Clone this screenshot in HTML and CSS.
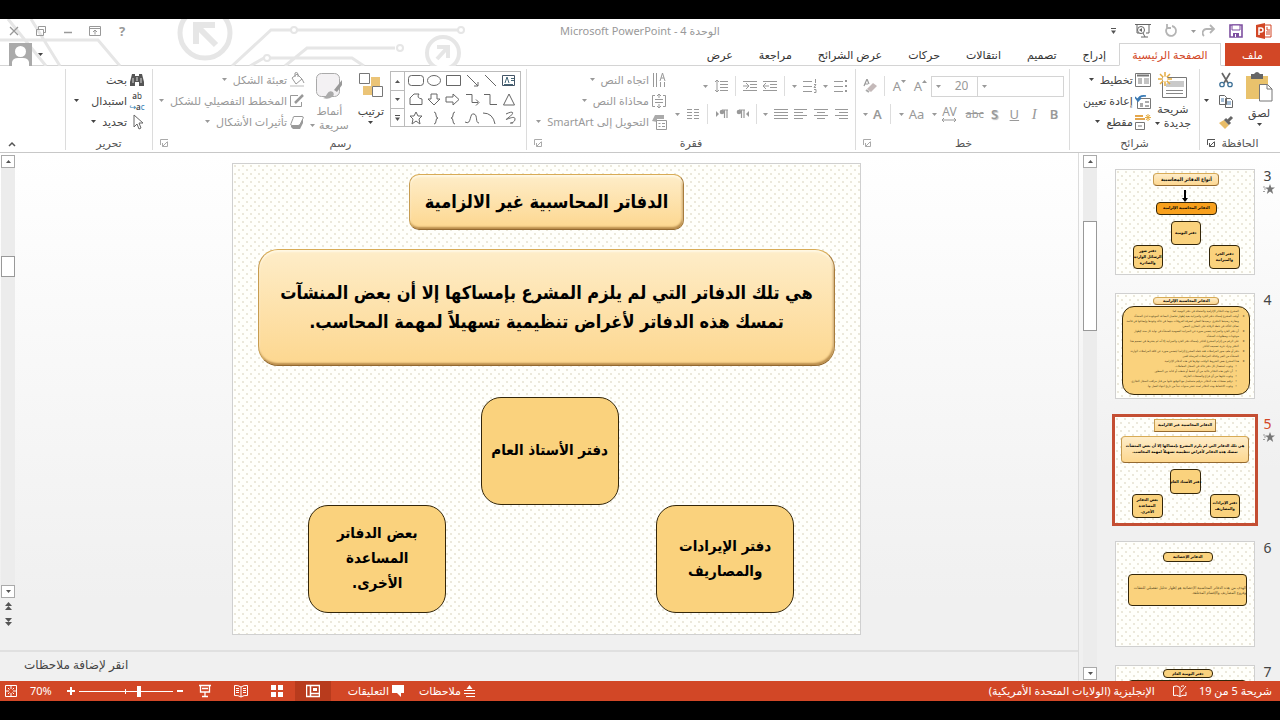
FILE: index.html
```html
<!DOCTYPE html>
<html lang="ar" dir="rtl">
<head>
<meta charset="utf-8">
<title>الوحدة 4 - Microsoft PowerPoint</title>
<link rel="stylesheet" href="styles.css">
</head>
<body>
<svg class="defs" aria-hidden="true">
  <symbol id="caret" viewBox="0 0 5 3"><path d="M0 0h5L2.500 3z" fill="currentColor"/></symbol>
  <symbol id="launch" viewBox="0 0 8 8"><path d="M8 .5H.5V6M7.500 2.500v5H2.500M7 3 3 7M2.500 4v3.500H6" fill="none" stroke="currentColor"/></symbol>
  <symbol id="star" viewBox="0 0 12 10"><path d="m7 0 1.300 3.500H12L9 5.800 10.200 10 7 7.400 3.800 10 5 5.800 2 3.500h3.700z" fill="currentColor"/><path d="M0 3h2M1 5h2M0 7.500h2" stroke="currentColor" stroke-width=".7"/></symbol>
</svg>

<div class="app">
  <header class="head">
    <svg class="circuit" viewBox="0 0 480 47" fill="none" stroke="#e6e6e6" stroke-width="3" aria-hidden="true">
      <path d="M0 21h98l22 26M8 0l38 47M31 0l29 47M232 47l39-36h190M250 47l14-8h88l12 8M285 47l22-18h88"/>
      <circle cx="294" cy="11" r="3" fill="#fff" stroke-width="2"/><circle cx="267" cy="39" r="3" fill="#fff" stroke-width="2"/><circle cx="461" cy="11" r="3" fill="#fff" stroke-width="2"/><circle cx="400" cy="29" r="3" fill="#fff" stroke-width="2"/>
      <circle cx="205" cy="14" r="25" fill="#fff" stroke-width="5"/><path d="M196 25V6h19M196 6l20 20" stroke-width="6"/>
      <circle cx="443" cy="34" r="16" fill="#fff" stroke-width="4"/><path d="M437 28h11v11M448 28l-11 12" stroke-width="4"/>
    </svg>
    <div class="titlebar">
      <div class="quick">
        <svg class="i16" viewBox="0 0 16 16"><path d="M7 2h8v12H7z" fill="#fff" stroke="#d24726"/><path d="M11 4v3h3M10 9h4M10 11h4" stroke="#d24726" fill="none"/><path d="M0 2 9 0v16L0 14z" fill="#d24726"/><path d="M3 12V5h2a1.800 1.800 0 0 1 0 4H3" fill="none" stroke="#fff" stroke-width="1.500"/></svg>
        <button aria-label="حفظ"><svg class="i14" viewBox="0 0 14 14"><path d="M1 1h12v12H1z" fill="#fff" stroke="#7d4fa0" stroke-width="1.600"/><path d="M3 1h8v5H3z" fill="#fff" stroke="#7d4fa0"/><path d="M4 9h6v4H4z" fill="#7d4fa0"/><path d="M6 10h1v3H6z" fill="#fff"/></svg></button>
        <button aria-label="تراجع" class="split"><svg class="i14" viewBox="0 0 14 14"><path d="M8 1l4 4-4 4M12 5H5a4 4 0 0 0-3 7" fill="none" stroke="#b4b4b4" stroke-width="1.800"/></svg><svg class="caret"><use href="#caret"/></svg></button>
        <button aria-label="تكرار"><svg class="i14" viewBox="0 0 14 14"><path d="M8 2a5 5 0 1 1-5 2M3 0v4h4" fill="none" stroke="#b4b4b4" stroke-width="1.800"/></svg></button>
        <button aria-label="بدء العرض"><svg class="i16" viewBox="0 0 16 16"><path d="M0 1.500h16M2 2v8h4M14 2v8h-3M6 14h7" fill="none" stroke="#666"/><circle cx="6" cy="7" r="3.500" fill="#fff" stroke="#666"/><path d="m7 5-3 2 3 2z" fill="#666"/><path d="m8 10 2 4" stroke="#666"/></svg></button>
        <button aria-label="تخصيص" class="more"><svg width="5" height="6" viewBox="0 0 5 6"><path d="M0 .5h5" stroke="#555"/><path d="M0 2.500h5L2.500 6z" fill="#555"/></svg></button>
      </div>
      <h1 class="title">الوحدة 4 - Microsoft PowerPoint</h1>
      <div class="window">
        <button aria-label="تعليمات">?</button>
        <button aria-label="خيارات الشريط"><svg class="i12" viewBox="0 0 12 10"><path d="M.5.500h11v9H.5zM.5 2.500h11M6 8.500v-4M4 6l2-2 2 2" fill="none" stroke="#999"/></svg></button>
        <button aria-label="تصغير"><svg class="i12" viewBox="0 0 12 10"><path d="M2 6.500h8" stroke="#999" stroke-width="1.500"/></svg></button>
        <button aria-label="استعادة"><svg class="i12" viewBox="0 0 12 10"><path d="M3.500 3V.5h7v6H8M1.500 3.500h7v6h-7z" fill="none" stroke="#999"/></svg></button>
        <button aria-label="إغلاق"><svg class="i12" viewBox="0 0 12 10"><path d="m2 1 8 8M10 1 2 9" stroke="#999" stroke-width="1.300"/></svg></button>
      </div>
    </div>
    <nav class="tabs">
      <button class="tab file">ملف</button>
      <button class="tab active">الصفحة الرئيسية</button>
      <button class="tab">إدراج</button>
      <button class="tab">تصميم</button>
      <button class="tab">انتقالات</button>
      <button class="tab">حركات</button>
      <button class="tab">عرض الشرائح</button>
      <button class="tab">مراجعة</button>
      <button class="tab">عرض</button>
      <button class="account" aria-label="الحساب"><svg class="caret"><use href="#caret"/></svg><svg width="23" height="23" viewBox="0 0 23 23"><path d="M0 0h23v23H0z" fill="#aaa"/><circle cx="11.500" cy="8.500" r="5.500" fill="#fff"/><path d="M3 23v-4q1-4 6-4h5q5 0 6 4v4z" fill="#fff"/></svg></button>
    </nav>
  </header>

  <section class="ribbon">
    <div class="group clipboard">
      <div class="body">
        <button class="big"><svg width="28" height="30" viewBox="0 0 28 30"><path d="M1 4h22v23H1z" fill="#e9c26c"/><path d="M6 2h3q3-4 6 0h3v5H6z" fill="#666"/><path d="M14.500 12.500h8l4.500 4.500v12h-12.500z" fill="#fff" stroke="#777"/><path d="M22 12.500V17h5" fill="none" stroke="#777"/></svg><span>لصق</span><svg class="caret"><use href="#caret"/></svg></button>
        <div class="stack">
          <button aria-label="قص"><svg class="i16" viewBox="0 0 16 16"><path d="m4 1 6 10M12 1 6 11" stroke="#666" stroke-width="1.700"/><circle cx="4" cy="12.500" r="2.200" fill="none" stroke="#3e7197" stroke-width="1.300"/><circle cx="12" cy="12.500" r="2.200" fill="none" stroke="#3e7197" stroke-width="1.300"/></svg></button>
          <button aria-label="نسخ"><svg class="i16" viewBox="0 0 16 16"><path d="M1.500 2.500h5l2 2v7h-7zM7.500 5.500h5l2 2v7h-7z" fill="#fff" stroke="#666"/><path d="M3 6h3M3 8h3M9 9h4M9 11h4" stroke="#4a7cae"/></svg><svg class="caret"><use href="#caret"/></svg></button>
          <button aria-label="نسخ التنسيق"><svg class="i16" viewBox="0 0 16 16"><path d="m1 9 5-3 5 5-4 4z" fill="#e9bd68"/><path d="m7 5 5 5M10 7l4-4" stroke="#666" stroke-width="3"/></svg></button>
        </div>
      </div>
      <div class="foot"><span>الحافظة</span><button aria-label="خيارات الحافظة"><svg class="launch"><use href="#launch"/></svg></button></div>
    </div>

    <div class="group slides">
      <div class="body">
        <button class="big"><svg width="30" height="28" viewBox="0 0 30 28"><path d="M4.500 5.500h24v20h-24z" fill="#fff" stroke="#777"/><path d="M12 9h14v6H8v-3z" fill="#c9c9c9"/><path d="M8 18.500h17M8 21.500h17" stroke="#888"/><path d="M7 0v14M0 7h14M2 2l10 10M12 2 2 12" stroke="#e5ad42" stroke-width="1.500"/><circle cx="7" cy="7" r="2.500" fill="#fff"/></svg><span>شريحة</span><span class="inline">جديدة<svg class="caret"><use href="#caret"/></svg></span></button>
        <div class="stack">
          <button><svg class="i16" viewBox="0 0 16 16"><path d="M.5 1.500h15v13H.5z" fill="#fff" stroke="#777"/><path d="M2 3.500h12" stroke="#777" stroke-width="2"/><path d="M3 6h4v6H3z" fill="#bbb"/><path d="M9 7h5M9 9h5M9 11h5" stroke="#888"/></svg><span>تخطيط</span><svg class="caret"><use href="#caret"/></svg></button>
          <button><svg class="i16" viewBox="0 0 16 16"><path d="M2.500 5.500h13v10h-13z" fill="#fff" stroke="#777"/><path d="M5 10h3v4H5zM10 8h4v2h-4zM10 12h4v2h-4z" fill="#aaa"/><path d="M3 7q1-5 8-4M0 4l3 4 3-3" fill="none" stroke="#3879b4" stroke-width="1.600"/></svg><span>إعادة تعيين</span></button>
          <button><svg class="i16" viewBox="0 0 16 16"><path d="M.5 8.500h9v7h-9z" fill="#fff" stroke="#777"/><path d="M0 5h10M0 2h8" stroke="#e4a64c" stroke-width="2"/><path d="M3 11h4v2H3z" fill="#bbb"/><path d="M13 0v7M10 3.500h6M11 1l4 5M15 1l-4 5" stroke="#e5ad42"/></svg><span>مقطع</span><svg class="caret"><use href="#caret"/></svg></button>
        </div>
      </div>
      <div class="foot"><span>شرائح</span></div>
    </div>

    <div class="group font dim">
      <div class="body rows">
        <div class="row">
          <label class="combo face"><select aria-label="الخط"><option></option></select><svg class="caret"><use href="#caret"/></svg></label><label class="combo size"><select aria-label="حجم الخط"><option>20</option></select><svg class="caret"><use href="#caret"/></svg></label>
          <button class="glyph grow">A<svg class="caret up"><use href="#caret"/></svg></button><button class="glyph grow">A<svg class="caret"><use href="#caret"/></svg></button><i class="sep"></i>
          <button aria-label="مسح التنسيق"><svg class="i14" viewBox="0 0 14 14"><path d="m1 7 3-7 2 5M2 5h3" fill="none" stroke="#999" stroke-width="1.200"/><path d="m4 10 6-6 4 3-6 6z" fill="#c4b9b9"/><path d="m3 11 3 2" stroke="#aaa" stroke-width="2"/></svg></button>
        </div>
        <div class="row letters">
          <button class="glyph"><b>B</b></button><button class="glyph serif"><em>I</em></button><button class="glyph"><u>U</u></button><button class="glyph shadow"><b>S</b></button><button class="glyph small"><s>abc</s></button>
          <button class="glyph split"><span class="av">AV<svg width="14" height="4" viewBox="0 0 14 4"><path d="M0 2h14M2 0 0 2l2 2M12 0l2 2-2 2" fill="none" stroke="currentColor"/></svg></span><svg class="caret"><use href="#caret"/></svg></button><button class="glyph split">Aa<svg class="caret"><use href="#caret"/></svg></button><i class="sep"></i><button class="glyph split"><b>A</b><svg class="caret"><use href="#caret"/></svg></button>
        </div>
      </div>
      <div class="foot"><span>خط</span><button aria-label="خيارات الخط"><svg class="launch"><use href="#launch"/></svg></button></div>
    </div>

    <div class="group para dim">
      <div class="body">
        <div class="rows">
          <div class="row">
            <button class="split" aria-label="تعداد نقطي"><svg class="i14" viewBox="0 0 14 14"><path d="M0 2.500h9M0 7.500h9M0 12.500h9" stroke="currentColor"/><path d="M11 1h2v2h-2zM11 6h2v2h-2zM11 11h2v2h-2z" fill="currentColor"/></svg><svg class="caret"><use href="#caret"/></svg></button>
            <button class="split" aria-label="تعداد رقمي"><svg class="i14" viewBox="0 0 14 14"><path d="M0 2.500h9M0 7.500h9M0 12.500h9M12.500 0v4M11 5.500h2L11 8.500h2M11 10.500h2v3h-2" fill="none" stroke="currentColor"/></svg><svg class="caret"><use href="#caret"/></svg></button><i class="sep"></i>
            <button aria-label="تقليل المسافة"><svg class="i14" viewBox="0 0 14 14"><path d="M0 2.500h14M7 5.500h7M7 8.500h7M0 11.500h14M0 7h6M3 4 0 7l3 3" fill="none" stroke="currentColor"/></svg></button>
            <button aria-label="زيادة المسافة"><svg class="i14" viewBox="0 0 14 14"><path d="M0 2.500h14M7 5.500h7M7 8.500h7M0 11.500h14M0 7h6M3 4l3 3-3 3" fill="none" stroke="currentColor"/></svg></button><i class="sep"></i>
            <button class="split" aria-label="تباعد الأسطر"><svg class="i14" viewBox="0 0 14 14"><path d="M6 2.500h8M6 5.500h8M6 8.500h8M6 11.500h8M3 1v12M1 3l2-2 2 2M1 11l2 2 2-2" fill="none" stroke="currentColor"/></svg><svg class="caret"><use href="#caret"/></svg></button>
          </div>
          <div class="row">
            <button aria-label="يمين"><svg class="i14" viewBox="0 0 14 14"><path d="M1 2.500h13M5 5.500h9M1 8.500h13M5 11.500h9" stroke="currentColor"/></svg></button>
            <button aria-label="توسيط"><svg class="i14" viewBox="0 0 14 14"><path d="M0 2.500h14M3 5.500h8M0 8.500h14M3 11.500h8" stroke="currentColor"/></svg></button>
            <button aria-label="يسار"><svg class="i14" viewBox="0 0 14 14"><path d="M0 2.500h13M0 5.500h9M0 8.500h13M0 11.500h9" stroke="currentColor"/></svg></button>
            <button class="split" aria-label="ضبط"><svg class="i14" viewBox="0 0 14 14"><path d="M0 2.500h14M0 5.500h14M0 8.500h14M0 11.500h14" stroke="currentColor"/></svg><svg class="caret"><use href="#caret"/></svg></button><i class="sep"></i>
            <button aria-label="من اليمين لليسار"><svg class="i14" viewBox="0 0 14 14"><path d="M4 3h6M6.500 3v8M9 3v8" stroke="currentColor" stroke-width="1.200"/><circle cx="4" cy="5" r="2.300" fill="currentColor"/><path d="M14 4v6l-3-3z" fill="currentColor"/></svg></button>
            <button aria-label="من اليسار لليمين"><svg class="i14" viewBox="0 0 14 14"><path d="M7 3h6M9.500 3v8M12 3v8" stroke="currentColor" stroke-width="1.200"/><circle cx="7" cy="5" r="2.300" fill="currentColor"/><path d="M1 4v6l3-3z" fill="currentColor"/></svg></button><i class="sep"></i>
            <button class="split" aria-label="أعمدة"><svg class="i14" viewBox="0 0 14 14"><path d="M1 2.500h5M1 5.500h5M1 8.500h5M1 11.500h5M8 2.500h5M8 5.500h5M8 8.500h5M8 11.500h5" stroke="currentColor"/></svg><svg class="caret"><use href="#caret"/></svg></button>
          </div>
        </div>
        <div class="stack">
          <button><svg class="i16" viewBox="0 0 16 16"><path d="M2.500 1v14M5.500 1v14M9 9l2.500-8L14 9M10 6h3M9.500 10v5M13.500 10v5" fill="none" stroke="currentColor"/></svg><span>اتجاه النص</span><svg class="caret"><use href="#caret"/></svg></button>
          <button><svg class="i16" viewBox="0 0 16 16"><path d="M4 2.500H1.500v11H4M12 2.500h2.500v11H12M4 6.500h8M4 9.500h8M8 1v4M6 3l2-2 2 2M8 11v4M6 13l2 2 2-2" fill="none" stroke="currentColor"/></svg><span>محاذاة النص</span><svg class="caret"><use href="#caret"/></svg></button>
          <button><svg class="i16" viewBox="0 0 16 16"><path d="M1 7 4 1h9v4H6v3z" fill="#aaa"/><path d="M5.500 6.500h10v9h-10z" fill="#fff" stroke="currentColor"/><path d="M7.500 9.500h2M11 9.500h3M7.500 12.500h2M11 12.500h3" stroke="currentColor"/></svg><span>التحويل إلى SmartArt</span><svg class="caret"><use href="#caret"/></svg></button>
        </div>
      </div>
      <div class="foot"><span>فقرة</span><button aria-label="خيارات الفقرة"><svg class="launch"><use href="#launch"/></svg></button></div>
    </div>

    <div class="group draw">
      <div class="body">
        <div class="gallery">
          <svg width="115" height="54" viewBox="0 0 115 54" fill="none" stroke="#666">
            <path d="M97.500 3.500h12v10h-12z" stroke="#456"/><path d="M100 11l2-6 2 6M106 6.500h3M106 8.500h3M99 12.500h9" stroke="#467"/>
            <path d="m80 3 11 11M62 3l11 11M73 10v4h-4"/><path d="M41.500 3.500h14v10h-14z"/><ellipse cx="29" cy="8.500" rx="6.500" ry="5"/><rect x="3.500" y="3.500" width="15" height="10" rx="3"/>
            <path d="M104 22l-5.500 11h11z"/><path d="M79 22.500h6v10h7M61 22.500h6v8h6M71 27.500l3 3-3 3M41 25h7v-3l6 5.500-6 5.500v-3h-7zM26 22h6v5h3l-6 6-6-6h3zM5 32.500V26l4-4h5q-3 4 3 5v5.500z"/>
            <path d="M101 42c8-4 9-1 2 4s7-4 7 1-9 4-2 4M78 41q10 0 12 11M60 50c7 4 4-10 9-8 4 1 1 9 5 9M50 40q-2 0-2 3t-2 3q2 0 2 3t2 3M29 40q2 0 2 3t2 3q-2 0-2 3t-2 3"/><path d="m11 40 2 4h4l-3 3 1 5-4-3-4 3 1-5-3-3h4z"/>
          </svg>
          <div class="pager">
            <button aria-label="أعلى"><svg class="caret up"><use href="#caret"/></svg></button><button aria-label="أسفل"><svg class="caret"><use href="#caret"/></svg></button><button aria-label="المزيد"><svg width="5" height="6" viewBox="0 0 5 6"><path d="M0 .5h5" stroke="#555"/><path d="M0 2.500h5L2.500 6z" fill="#555"/></svg></button>
          </div>
        </div>
        <button class="big arrange"><svg width="26" height="28" viewBox="0 0 26 28"><path d="M13 5h9v9h-9zM5 14h9v9H5z" fill="#ebc477"/><path d="M1.500 1.500h10v10h-10zM14.500 14.500h10v10h-10z" fill="#fff" stroke="#777"/></svg><span>ترتيب</span><svg class="caret"><use href="#caret"/></svg></button>
        <button class="big dim"><svg width="28" height="28" viewBox="0 0 28 28"><rect x="1.500" y="1.500" width="23" height="23" rx="5" fill="#f3f1f3" stroke="#aaa"/><path d="m27 8-8 10 3 2 5-7z" fill="#999"/><path d="M8 26q3-1 4-4 2-4 6-2 2 3-1 5-4 3-9 1z" fill="#aaa"/></svg><span>أنماط</span><span class="inline">سريعة<svg class="caret"><use href="#caret"/></svg></span></button>
        <div class="stack dim">
          <button><svg class="i16" viewBox="0 0 16 16"><path d="m3 6 5-4 5 5-6 5zM6 5V1q2-2 3 1v3M13 7l2 4" fill="none" stroke="currentColor"/><path d="M1 13h14v2H1z" fill="#ddd"/></svg><span>تعبئة الشكل</span><svg class="caret"><use href="#caret"/></svg></button>
          <button><svg class="i16" viewBox="0 0 16 16"><path d="M9 2.500H1.500v11h11V9" fill="none" stroke="currentColor"/><path d="m6 10 8-8" stroke="currentColor" stroke-width="2.500"/></svg><span>المخطط التفصيلي للشكل</span><svg class="caret"><use href="#caret"/></svg></button>
          <button><svg class="i16" viewBox="0 0 16 16"><path d="M2 10v3l2 2h7l3-6V5z" fill="#999"/><path d="m5 2.500h8q2 0 1 2l-3 6q-1 1-2 1H3q-2 0-1-2l2-5q0-2 1-2z" fill="#fff" stroke="currentColor"/></svg><span>تأثيرات الأشكال</span><svg class="caret"><use href="#caret"/></svg></button>
        </div>
      </div>
      <div class="foot"><span>رسم</span><button aria-label="خيارات الرسم"><svg class="launch"><use href="#launch"/></svg></button></div>
    </div>

    <div class="group edit">
      <div class="body">
        <div class="stack">
          <button><svg class="i16" viewBox="0 0 16 16"><path d="M3 2h3v2h4V2h3l2 8v4h-5v-4H6v4H1v-4z" fill="#555"/><path d="M4 6v5M12 6v5M8 5v4" stroke="#ddd"/></svg><span>بحث</span></button>
          <button><span class="swap" dir="ltr"><span><b>a</b>b</span><span><i>↪</i><b>a</b><i>c</i></span></span><span>استبدال</span><svg class="caret far"><use href="#caret"/></svg></button>
          <button><svg class="i16" viewBox="0 0 16 16"><path d="M5 1v12l3-3 2 5 2-1-2-5h4z" fill="#fff" stroke="#666"/></svg><span>تحديد</span><svg class="caret"><use href="#caret"/></svg></button>
        </div>
      </div>
      <div class="foot"><span>تحرير</span></div>
    </div>
    <button class="collapse" aria-label="طي الشريط"><svg width="8" height="6" viewBox="0 0 8 6"><path d="m1 5 3-3 3 3" fill="none" stroke="#555" stroke-width="1.500"/></svg></button>
  </section>

  <main class="work">
    <aside class="panel">
      <ol class="thumbs">
        <li><div class="num">3<svg class="star"><use href="#star"/></svg></div>
          <div class="slide mini t3"><p class="box grad title3">أنواع الدفاتر المحاسبية</p><svg class="down" viewBox="0 0 6 12"><path d="M2 0h2v8h2l-3 4-3-4h2z"/></svg><p class="box orange">الدفاتر المحاسبية الإلزامية</p><p class="box top">دفتر اليومية</p><p class="box right">دفتر الجرد<br>والميزانية</p><p class="box left">دفتر صور<br>الرسائل الواردة<br>والصادرة</p></div></li>
        <li><div class="num">4</div>
          <div class="slide mini t4"><p class="box grad title4">الدفاتر المحاسبية الإلزامية</p>
            <div class="box long"><p>المشرع بهذه الدفاتر الإلزامية والمتمثلة في دفتر اليومية كما:</p><p class="pt">أوجب المشرع إمساك دفتر الجرد والميزانية بغية إظهار تفاصيل البضاعة الموجودة لدى المنشأة ومقارنة رصيدها الدفتري برصيدها الفعلي لمعرفة الفروقات بينهما في حالة وجودها وإيضاحها في قائمة تضاف للتأكد في خطة الرقابة على المخازن السعي.</p><p class="pt">أن دفتر الجرد والميزانية يتضمن صورة عن الميزانية العمومية للمنشأة في نهاية كل سنة لإظهار موجودات ومطلوبات المنشأة.</p><p class="pt">على الرغم من إلزام المشرع للتاجر بإمساك دفتر الجرد والميزانية إلا أنه لم يشترط في تصميم هذا الدفتر وترك حرية تصميمه للتاجر.</p><p class="pt">دفتر أو ملف صور المراسلات فقد جعله المشرع إلزاميا ليتضمن صورة عن كافة المراسلات الواردة للمنشأة من الغير وكذلك المراسلات المرسلة للغير.</p><p class="pt">هذا المشرع بعض الشروط الواجب توفرها في هذه الدفاتر الإلزامية.</p><p class="sub">وجوب استعمال كل دفتر حالة في السجل المعاملات.</p><p class="sub">أن تكون هذه الدفاتر خالية من أي كشط أو شطب أو كتابة بين السطور.</p><p class="sub">وجوب خلوها من أي فراغ والصفحات الفارغة.</p><p class="sub">ترقيم صفحات هذه الدفاتر بترقيم متسلسل مع التوقيع عليها من قبل مراقب السجل التجاري.</p><p class="sub">وجوب الاحتفاظ بهذه الدفاتر لمدة عشر سنوات تبدأ من تاريخ انتهاء العمل بها.</p></div></div></li>
        <li class="current"><div class="num">5<svg class="star"><use href="#star"/></svg></div>
          <div class="slide mini"><p class="box grad head5">الدفاتر المحاسبية غير الالزامية</p><p class="box grad def">هي تلك الدفاتر التي لم يلزم المشرع بإمساكها إلا أن بعض المنشآت<br>تمسك هذه الدفاتر لأغراض تنظيمية تسهيلاً لمهمة المحاسب.</p><p class="box top">دفتر الأستاذ العام</p><p class="box right">دفتر الإيرادات<br>والمصاريف</p><p class="box left">بعض الدفاتر<br>المساعدة<br>الأخرى.</p></div></li>
        <li><div class="num">6</div>
          <div class="slide mini t6"><p class="box cap6">الدفاتر الإحصائية</p><p class="box wide6">الهدف من هذه الدفاتر المحاسبية الإحصائية هو إظهار تحليل تفصيلي للنفقات وفروع المصاريف والإقسام المختلفة.</p></div></li>
        <li><div class="num">7</div>
          <div class="slide mini t7"><p class="box cap7">دفتر اليومية العام</p><p class="box wide7"></p></div></li>
      </ol>
      <div class="scroll">
        <button aria-label="أعلى"><svg class="caret up"><use href="#caret"/></svg></button><div class="track"><span class="thumb tall"></span></div><button aria-label="أسفل"><svg class="caret"><use href="#caret"/></svg></button>
      </div>
    </aside>

    <section class="editor">
      <div class="stagerow">
        <div class="stage">
          <article class="slide main">
            <h2 class="box grad head5">الدفاتر المحاسبية غير الالزامية</h2>
            <p class="box grad def">هي تلك الدفاتر التي لم يلزم المشرع بإمساكها إلا أن بعض المنشآت<br>تمسك هذه الدفاتر لأغراض تنظيمية تسهيلاً لمهمة المحاسب.</p>
            <p class="box top">دفتر الأستاذ العام</p>
            <p class="box right">دفتر الإيرادات<br>والمصاريف</p>
            <p class="box left">بعض الدفاتر<br>المساعدة<br>الأخرى.</p>
          </article>
        </div>
        <div class="scroll side">
          <button aria-label="أعلى"><svg class="caret up"><use href="#caret"/></svg></button><div class="track"><span class="thumb short"></span></div><button aria-label="أسفل"><svg class="caret"><use href="#caret"/></svg></button>
          <button class="bare" aria-label="الشريحة السابقة"><svg width="7" height="8" viewBox="0 0 7 8"><path d="M3.500 0 7 4H0zM3.500 4 7 8H0z" fill="#555"/></svg></button>
          <button class="bare" aria-label="الشريحة التالية"><svg width="7" height="8" viewBox="0 0 7 8"><path d="M0 0h7L3.500 4zM0 4h7L3.500 8z" fill="#555"/></svg></button>
        </div>
      </div>
      <div class="notes">انقر لإضافة ملاحظات</div>
    </section>
  </main>

  <footer class="status">
    <span>شريحة 5 من 19</span>
    <button aria-label="تدقيق إملائي" class="proof"><svg class="i14" viewBox="0 0 14 14"><path d="M7 3.500Q4 1 .5 2.500v9q3-1 6.500 1V3.500M8 2.500q2-1 3-.5M7 12.500q3-2 6-1V8M8 8l5-6" fill="none" stroke="#fff"/></svg></button>
    <span>الإنجليزية (الولايات المتحدة الأمريكية)</span>
    <div class="tools">
      <button class="text"><svg width="11" height="12" viewBox="0 0 11 12"><path d="M0 5.500h11M0 8.500h11M2 11.500h9" stroke="#fff"/><path d="m5.500 0 3 4h-6z" fill="#fff"/></svg>ملاحظات</button>
      <button class="text comments"><svg width="12" height="12" viewBox="0 0 12 12"><path d="M0 0h12v8H9v4L5 8H0z" fill="#fff"/></svg>التعليقات</button>
      <button class="view on" aria-label="عادي"><svg class="i14" viewBox="0 0 14 14"><path d="M.5 1.500h13v11H.5zM4.500 1v11M4.500 9.500h9" fill="none" stroke="#fff" stroke-width="1.500"/><path d="M7 4h4v3H7z" fill="#fff"/></svg></button>
      <button class="view" aria-label="فارز الشرائح"><svg class="i14" viewBox="0 0 14 14"><path d="M1 1h5v5H1zM8 1h5v5H8zM1 8h5v5H1zM8 8h5v5H8z" fill="#fff"/></svg></button>
      <button class="view" aria-label="قراءة"><svg class="i14" viewBox="0 0 14 14"><path d="M7 3Q4 1 .5 1.500v10Q4 11 7 13q3-2 6.500-1.500v-10Q10 1 7 3v10M2 4.500h3M2 6.500h3M2 8.500h3M9 4.500h3M9 6.500h3M9 8.500h3" fill="none" stroke="#fff"/></svg></button>
      <button class="view" aria-label="عرض الشرائح"><svg class="i14" viewBox="0 0 14 14"><path d="M1 1.500h12M2.500 2v6h9V2M7 8v4M4 12.500h6M4 4.500h6" fill="none" stroke="#fff" stroke-width="1.300"/></svg></button>
      <div class="zoom"><button aria-label="تصغير"><svg width="7" height="8" viewBox="0 0 7 8"><path d="M0 4h6" stroke="#fff" stroke-width="2"/></svg></button><input type="range" min="0" max="100" value="35" aria-label="تكبير/تصغير"><button aria-label="تكبير"><svg width="8" height="8" viewBox="0 0 8 8"><path d="M0 4h8M4 0v8" stroke="#fff" stroke-width="2"/></svg></button></div>
      <span class="pct" dir="ltr">70%</span>
      <button aria-label="احتواء"><svg class="i12" viewBox="0 0 12 12"><path d="M.5.500h11v11H.5zM6 1v3M6 8v3M1 6h3M8 6h3M3 3l1.500 1.500M9 3 7.500 4.500M3 9l1.500-1.500M9 9 7.500 7.500" fill="none" stroke="#fff"/></svg></button>
    </div>
  </footer>
</div>
</body>
</html>
```
FILE: styles.css
```css
* { box-sizing: border-box; }
body { margin: 0; background: #000; color: #444; font: 11px/14px "Noto Sans", "DejaVu Sans", sans-serif; }
h1, h2, p, ol { margin: 0; padding: 0; font-weight: normal; }
button { display: inline-flex; align-items: center; margin: 0; padding: 0; border: 0; background: none; color: inherit; font: inherit; white-space: nowrap; }
svg { display: block; flex: none; }
.defs { position: absolute; width: 0; height: 0; }
.app { display: flex; flex-direction: column; min-height: 100vh; padding: 19px 0; }
.i16 { width: 16px; height: 16px; }
.i14 { width: 14px; height: 14px; }
.i12 { width: 12px; height: 12px; }
.caret { width: 5px; height: 3px; }
.caret.up { rotate: 180deg; }
.launch { width: 8px; height: 8px; }
.dim { color: #999; }

/* title bar and tabs */
.head { position: relative; background: #fff; border-bottom: 1px solid #d4d4d4; }
.circuit { position: absolute; left: 0; top: 0; width: 480px; height: 47px; }
.titlebar { position: relative; display: grid; grid-template-columns: 1fr auto 1fr; align-items: center; height: 24px; }
.title { color: #999; font-size: 11px; line-height: 16px; }
.quick { display: flex; align-items: center; gap: 13px; padding-right: 8px; }
.quick .split { gap: 6px; color: #999; }
.quick .more { margin-right: 6px; }
.window { display: flex; justify-content: flex-end; gap: 15px; padding-left: 8px; color: #999; font-size: 13px; font-weight: bold; }
.window button { justify-content: center; width: 12px; }
.tabs { position: relative; display: flex; height: 23px; margin-bottom: -1px; }
.tab { padding: 0 13px; font-size: 11px; color: #333; }
.file { justify-content: center; width: 55px; margin-left: 4px; background: #d24726; color: #fff; }
.active { justify-content: center; width: 102px; border: 1px solid #d4d4d4; border-bottom-color: #fff; background: #fff; color: #d24726; }
.account { gap: 6px; margin-right: auto; padding-left: 9px; }

/* ribbon */
.ribbon { display: flex; height: 87px; background: #fff; border-bottom: 1px solid #c8c8c8; }
.group { display: flex; flex-direction: column; flex: none; margin: 3px 0 2px; padding: 0 7px; border-left: 1px solid #dcdcdc; }
.body { display: flex; flex: 1; }
.foot { display: grid; grid-template-columns: 8px 1fr 8px; align-items: center; height: 14px; color: #555; }
.foot span { grid-column: 2; text-align: center; }
.dim .foot button, .draw .foot button { color: #aaa; }
.clipboard { width: 81px; }
.slides { width: 130px; }
.font { width: 214px; padding-right: 5px; }
.para { width: 329px; }
.draw { width: 374px; padding-right: 5px; }
.edit { width: 87px; }
.big { flex-direction: column; justify-content: flex-start; padding-top: 3px; }
.big span { line-height: 14px; }
.big > svg:first-child { margin-bottom: 4px; }
.big > .caret { margin-top: 3px; }
.inline { display: flex; align-items: center; gap: 4px; }
.stack { display: flex; flex-direction: column; align-items: flex-start; }
.stack button { gap: 6px; height: 21px; }
.stack .i16 { margin-left: -4px; }
.clipboard .stack { margin-right: 11px; }
.clipboard .stack button { gap: 13px; }
.slides .stack { margin-right: 4px; }
.slides .big { margin-right: 1px; }
.slides .big > svg:first-child { margin-bottom: 2px; }
.rows { display: flex; flex-direction: column; padding-top: 3px; }
.row { display: flex; align-items: center; height: 28px; }
.row .split { gap: 7px; }
.sep { width: 1px; height: 20px; background: #ddd; }
.combo { position: relative; display: flex; height: 21px; }
.combo select { appearance: none; width: 100%; padding: 0 9px; border: 1px solid #d4d4d4; background: #fff; color: #999; font: 12px/16px "Noto Sans", "DejaVu Sans", sans-serif; }
.combo .caret { position: absolute; left: 5px; top: 9px; }
.face { width: 87px; }
.size { width: 48px; margin-right: -1px; }
.glyph { justify-content: center; width: 21px; font-size: 13px; line-height: 18px; direction: ltr; }
.grow .caret { align-self: flex-start; margin-top: 3px; }
.font .row:first-child .sep { margin: 0 4px 0 7px; }
.font .glyph.split { flex-direction: row-reverse; gap: 5px; width: auto; }
.letters .split { margin-right: 8px; }
.letters .sep { margin: 0 8px; }
.letters .sep + .split { margin: 0; }
.serif { font-family: "Liberation Serif", serif; font-size: 15px; }
.shadow b { text-shadow: 1px 1px 1px #bbb; }
.small { font-size: 11px; }
.av { display: flex; flex-direction: column; font-size: 12px; line-height: 12px; }
.font b { font-weight: 600; }
.para .row { gap: 6px; }
.para .rows { width: 173px; }
.para .stack { margin-right: 8px; }
.para .row .split { gap: 6px; }
.para .row .sep { margin: 0 1px; }
.gallery { display: flex; align-self: flex-start; height: 56px; margin-top: 2px; border: 1px solid #bbb; }
.pager { display: grid; grid-template-rows: repeat(3, 1fr); width: 14px; border-right: 1px solid #bbb; color: #555; }
.pager button { justify-content: center; }
.pager button + button { border-top: 1px solid #bbb; }
.arrange { margin-right: 6px; }
.draw .big.dim { margin-right: 9px; }
.draw .stack { margin-right: 5px; }
.swap { display: flex; flex-direction: column; align-items: center; width: 16px; margin-left: -4px; font-size: 8px; line-height: 11px; }
.swap b { font-weight: 600; }
.swap i { font-style: normal; color: #2f80b5; }
.stack .far { margin-right: 6px; }
.collapse { align-self: flex-end; margin-right: auto; padding: 0 0 5px 8px; }

/* workspace */
.work { display: flex; flex: 1; min-height: 0; background: #f0f0f0; }
.panel { display: flex; width: 202px; height: 528px; border-left: 1px solid #dcdcdc; background: linear-gradient(#fff, #f0f0f0 60%); }
.thumbs { display: flex; flex: 1; flex-direction: column; gap: 18px; height: 528px; padding: 16px 5px 0 3px; overflow: hidden; list-style: none; }
.thumbs li { display: flex; flex: none; gap: 5px; }
.num { width: 15px; text-align: center; font-size: 14px; line-height: 14px; color: #444; }
.star { width: 12px; height: 10px; margin-top: 1px; color: #777; }
.current .num { color: #d24726; }
.scroll { display: flex; flex-direction: column; width: 14px; margin: 2px 15px 1px 4px; }
.scroll button { justify-content: center; height: 13px; border: 1px solid #aaa; background: #fff; color: #555; }
.scroll .bare { height: 16px; border: 0; background: none; }
.track { flex: 1; background: #ececec; }
.thumb { display: block; border: 1px solid #999; background: #fff; }
.tall { height: 110px; margin-top: 53px; }
.short { height: 21px; margin-top: 88px; }
.side { margin: 2px 0 20px 1px; }
.editor { display: flex; flex: 1; flex-direction: column; min-width: 0; }
.stagerow { display: flex; flex: 1; background: linear-gradient(#fff, #f0f0f0 90%); }
.stage { display: flex; flex: 1; align-items: center; justify-content: center; padding-bottom: 5px; }
.notes { height: 31px; padding: 5px 24px 0; border-top: 2px solid #e0e0e0; text-align: left; font-size: 12px; line-height: 16px; }

/* slides */
.slide { position: relative; flex: none; border: 1px solid #d0d0d0; background-color: #fffffb; background-image: radial-gradient(circle at 2px 2px, #bdb490 0, transparent 1px), radial-gradient(circle at 6px 6px, #bdb490 0, transparent 1px); background-size: 8px 8px; color: #000; font-family: "DejaVu Sans Condensed", "DejaVu Sans", sans-serif; font-stretch: condensed; font-weight: bold; }
.main { width: 629px; aspect-ratio: 4 / 3; font-size: 15px; line-height: 25px; }
.mini { width: 140px; height: 106px; font-size: 4px; line-height: 6px; }
.current .mini { outline: 3px solid #c44e33; border: 0; }
.box { position: absolute; display: flex; align-items: center; justify-content: center; border: 1px solid #33260a; border-radius: 20px; background: #fad27d; text-align: center; font-weight: bold; }
.mini .box { border-radius: 4px; }
.grad { background: linear-gradient(#feedc9, #fdd78f); border-color: #d8ab55 #a87c3c #94692f #c79c50; }
.main .grad { box-shadow: inset 0 2px 2px #fff8e4, inset -1px -2px 2px #b98d4c; }
.head5 { left: 28%; top: 2%; width: 44%; height: 12%; }
.def { left: 4%; top: 18%; width: 92%; height: 25%; }
.top { left: 39.5%; top: 49.5%; width: 22%; height: 23%; }
.right { left: 67.5%; top: 72.5%; width: 22%; height: 23%; }
.left { left: 12%; top: 72.5%; width: 22%; height: 23%; }
.main .head5 { border-radius: 10px; font-size: 18px; }
.main .def { font-size: 18px; line-height: 29px; }
.mini .head5 { font-size: 4px; border-radius: 0; }
.mini .def { font-size: 4px; }
.mini .top { white-space: nowrap; }
.title3 { left: 27%; top: 3%; width: 48%; height: 12%; font-size: 5px; }
.down { position: absolute; left: 48%; top: 19%; width: 6px; height: 12px; }
.orange { left: 29%; top: 31%; width: 44%; height: 12%; background: #f8a01c; }
.title4 { left: 27%; top: 3%; width: 48%; height: 8%; }
.mini .long { left: 4%; top: 12%; width: 93%; height: 85%; display: block; padding: 2px 10px 0 4px; border-radius: 12px; font-size: 3px; line-height: 5px; text-align: right; color: #4a3c1c; }
.pt::before { content: "➤"; float: right; margin-right: -6px; }
.sub { padding-right: 6px; }
.sub::before { content: "•"; float: right; margin-right: -4px; }
.cap6 { left: 34%; top: 10%; width: 36%; height: 9%; }
.mini .wide6 { left: 9%; top: 31%; width: 86%; height: 31%; font-size: 4px; font-weight: normal; text-align: right; line-height: 5px; color: #5a4a24; }
.cap7 { left: 34%; top: 3%; width: 36%; height: 9%; }
.wide7 { left: 9%; top: 13%; width: 86%; height: 70%; }

/* status bar */
.status { display: flex; align-items: center; height: 20px; padding: 0 8px 0 5px; background: #d24726; color: #fff; }
.proof { margin: 0 12px 0 18px; }
.tools { display: flex; align-items: center; height: 20px; margin-right: auto; }
.text { gap: 3px; }
.comments { margin: 0 15px 0 17px; }
.view { justify-content: center; width: 36px; height: 20px; }
.on { background: #b83b1d; }
.zoom { display: flex; align-items: center; gap: 4px; margin-right: 3px; }
.zoom input { appearance: none; width: 94px; height: 12px; margin: 0; background: linear-gradient(#fff, #fff) center / 1px 5px no-repeat, linear-gradient(#fff, #fff) center / 100% 1px no-repeat; }
.zoom input::-webkit-slider-thumb { appearance: none; width: 4px; height: 11px; background: #fff; }
.pct { margin: 0 15px 0 13px; }
```
